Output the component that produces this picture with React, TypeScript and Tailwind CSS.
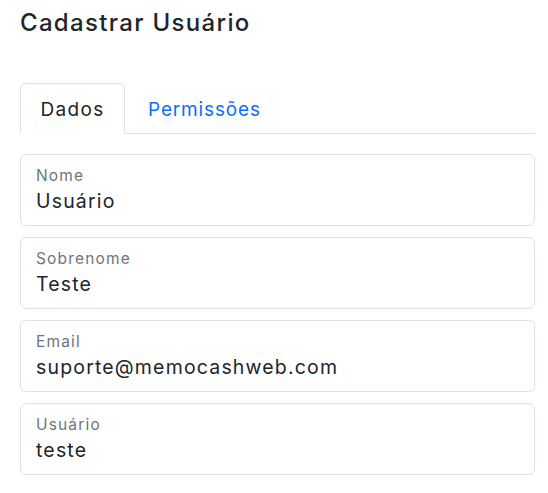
import React from 'react';

const FIELDS = [
  { label: 'Nome', value: 'Usuário' },
  { label: 'Sobrenome', value: 'Teste' },
  { label: 'Email', value: 'suporte@memocashweb.com' },
  { label: 'Usuário', value: 'teste' },
];

export default function App() {
  return (
    <div className="min-h-screen bg-white pl-5 pr-[13px] text-[#212529]" style={{ fontFamily: 'Inter, "Noto Sans", sans-serif' }}>
      <h1 className="pt-[7px] text-[24px] font-medium leading-[32px] tracking-[0.055em]">Cadastrar Usuário</h1>

      <div className="mt-[44px] flex border-b border-[#dee2e6]">
        <button className="-mb-px h-[51px] w-[105px] rounded-t-md border border-[#dee2e6] border-b-white bg-white pt-[3px] text-[19px] tracking-[0.07em] text-[#212529]">
          Dados
        </button>
        <button className="-mb-px h-[51px] pl-[23px] pt-[3px] text-[19px] tracking-[0.045em] text-[#0d6efd]">Permissões</button>
      </div>

      <div className="mt-5 flex flex-col gap-[11px]">
        {FIELDS.map(f => (
          <div key={f.label} className="h-[72px] rounded-md border border-[#dee2e6] px-[15px] pt-[11px]">
            <p className="text-[15.5px] leading-5 tracking-[0.075em] text-[#6c757d]">{f.label}</p>
            <p className="mt-[3px] text-[19.5px] leading-6 tracking-[0.06em]">{f.value}</p>
          </div>
        ))}
      </div>
    </div>
  );
}
